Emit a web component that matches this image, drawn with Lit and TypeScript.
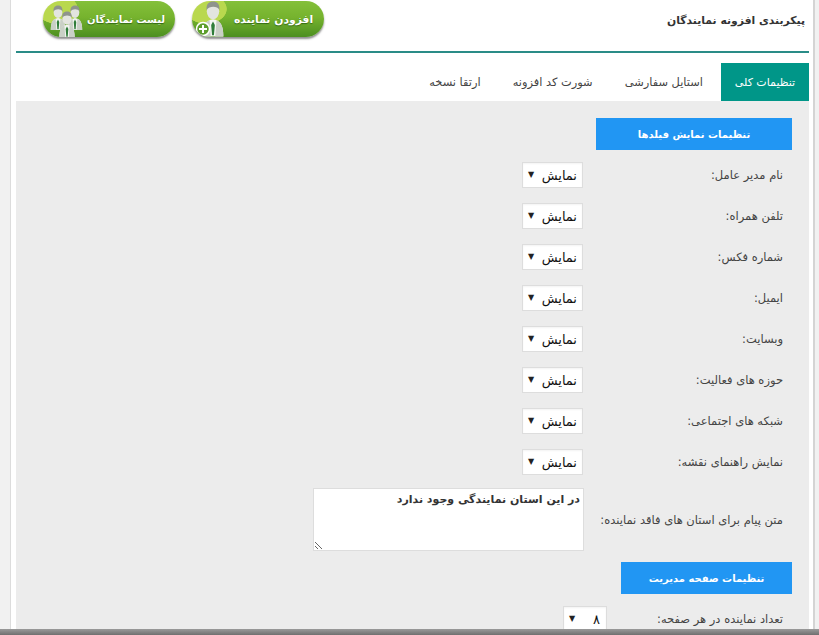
import { LitElement, html, css, svg } from "lit";
import { customElement } from "lit/decorators.js";

const person = (x: number, y: number, s: number) => svg`
  <g transform="translate(${x} ${y}) scale(${s})">
    <path d="M-9 30 C-9 20 -6 16 0 15 C6 16 9 20 9 30 Z" fill="#f4f6f2"/>
    <path d="M-9 30 C-9 21 -7 17 -3 16 L-2 30 Z M9 30 C9 21 7 17 3 16 L2 30 Z" fill="#c9d0c6"/>
    <path d="M0 17 L1.6 20 L0.8 29 L-0.8 29 L-1.6 20 Z" fill="#2f7d3a"/>
    <ellipse cx="0" cy="8" rx="5.4" ry="7" fill="#e3e5df"/>
    <path d="M-5.6 7 C-6 1 -3 -0.5 0 -0.5 C3.5 -0.5 6 1.5 5.6 7 C4 3.5 -3 3 -5.6 7 Z" fill="#8f948c"/>
  </g>`;

const listIcon = html`<svg class="ico" width="42" height="36" viewBox="0 0 42 36" aria-hidden="true">
  ${person(15, 5, 0.8)}${person(32, 5, 0.8)}${person(24, 11, 0.85)}
</svg>`;

const addIcon = html`<svg class="ico" width="42" height="36" viewBox="0 0 42 36" aria-hidden="true">
  ${person(21, 1, 1.15)}
  <circle cx="11" cy="28" r="6.5" fill="#5d9e2c" stroke="#fff" stroke-width="1.5"/>
  <path d="M11 24 V32 M7 28 H15" stroke="#fff" stroke-width="2"/>
</svg>`;

const fields = [
  "نام مدیر عامل:",
  "تلفن همراه:",
  "شماره فکس:",
  "ایمیل:",
  "وبسایت:",
  "حوزه های فعالیت:",
  "شبکه های اجتماعی:",
  "نمایش راهنمای نقشه:",
];

@customElement("app-root")
export class AppRoot extends LitElement {
  static styles = css`
    :host {
      display: block;
      width: 819px;
      height: 635px;
      overflow: hidden;
      background: #f1f1f1;
      font-family: "DejaVu Sans", sans-serif;
      color: #444;
    }
    .viewport {
      height: 629px;
      overflow: hidden;
      display: flex;
      padding: 0 4px 0 10px;
      box-sizing: border-box;
    }
    .bar {
      height: 6px;
      background: linear-gradient(#9a9a9a, #6f6f6f);
    }
    .frame {
      flex: 1;
      background: #fff;
      border-left: 1px solid #dcdcdc;
      border-right: 2px solid #d4d4d4;
      padding: 0 4px 0 5px;
      min-width: 0;
    }
    header {
      height: 51px;
      border-bottom: 2px solid #2a8c87;
      display: flex;
      flex-direction: row-reverse;
      justify-content: space-between;
      align-items: flex-start;
      padding: 0 4px 0 27px;
    }
    h1 {
      margin: 13px 0 0;
      font-size: 10.8px;
      line-height: 16px;
      font-weight: 700;
      color: #333;
    }
    .btns {
      display: flex;
      gap: 17px;
      padding-top: 1px;
    }
    .btn {
      width: 132px;
      height: 36px;
      border-radius: 18px;
      background:
        radial-gradient(ellipse 34px 24px at 14px 8px, #b9d84e 0 60%, transparent 62%),
        linear-gradient(#84c03a 0%, #76b32e 45%, #4c8f20 100%);
      box-shadow: 0 2px 2px rgba(70, 70, 70, 0.6);
      display: flex;
      flex-direction: row-reverse;
      align-items: center;
      justify-content: space-between;
      overflow: hidden;
      color: #fff;
      font-size: 10px;
      font-weight: 700;
      white-space: nowrap;
      text-shadow: 0 1px 1px rgba(0, 50, 0, 0.5);
      direction: rtl;
      padding: 0 10px 0 0;
      box-sizing: border-box;
    }
    .btn.add {
      padding-right: 13px;
      font-size: 10.8px;
    }
    .ico {
      flex: none;
    }
    nav {
      display: flex;
      flex-direction: row-reverse;
      height: 38px;
      margin-top: 10px;
      font-size: 11.4px;
      color: #444;
    }
    nav a {
      display: flex;
      align-items: center;
      padding: 0 16px;
      white-space: nowrap;
      direction: rtl;
    }
    nav a.on {
      width: 88px;
      box-sizing: border-box;
      justify-content: center;
      padding: 0;
      background: #009688;
      color: #fff;
      font-size: 11px;
    }
    nav a.t2 {
      margin-right: 2px;
    }
    .panel {
      background: #ececec;
      direction: rtl;
      padding: 17px 17px 0 0;
    }
    h2 {
      margin: 0;
      height: 32px;
      display: flex;
      align-items: center;
      justify-content: center;
      background: #2196f3;
      color: #fff;
      font-size: 10px;
      font-weight: 700;
    }
    h2.a {
      width: 196px;
    }
    h2.b {
      width: 171px;
    }
    .rows {
      display: grid;
      row-gap: 15px;
      margin: 12px 0 11px;
    }
    .row {
      display: grid;
      grid-template-columns: 209px auto;
      justify-content: start;
      align-items: center;
    }
    label {
      font-size: 11.5px;
      padding-right: 9px;
      white-space: nowrap;
      color: #444;
    }
    .select {
      width: 61px;
      height: 26px;
      box-sizing: border-box;
      background: #fff;
      border: 1px solid #ddd;
      box-shadow: inset 0 1px 2px rgba(0, 0, 0, 0.05);
      display: flex;
      align-items: center;
      justify-content: space-between;
      padding: 0 5px;
      font-size: 13px;
      color: #111;
    }
    .select.small {
      width: 44px;
      margin-right: -24px;
      padding: 0 6px 0 5px;
    }
    .arrow {
      font-size: 8px;
      line-height: 1;
      color: #222;
    }
    .text {
      width: 271px;
      height: 63px;
      box-sizing: border-box;
      display: block;
      margin: 0 -1px 0 0;
      border: 1px solid #ddd;
      background: #fff;
      font: 700 11px "DejaVu Sans", sans-serif;
      color: #333;
      padding: 4px 3px;
      direction: rtl;
    }
    .row.msg {
      margin-top: -2px;
    }
  `;

  private select(v = "نمایش", small = false) {
    return html`<div class="select ${small ? "small" : ""}" role="combobox">
      <span>${v}</span><span class="arrow">▼</span>
    </div>`;
  }

  render() {
    return html`
      <div class="viewport">
        <div class="frame">
          <header>
            <h1 dir="rtl">پیکربندی افزونه نمایندگان</h1>
            <div class="btns">
              <div class="btn">${listIcon}<span>لیست نمایندگان</span></div>
              <div class="btn add">${addIcon}<span>افزودن نماینده</span></div>
            </div>
          </header>
          <nav>
            <a class="on">تنظیمات کلی</a>
            <a class="t2">استایل سفارشی</a>
            <a>شورت کد افزونه</a>
            <a>ارتقا نسخه</a>
          </nav>
          <div class="panel">
            <h2 class="a">تنظیمات نمایش فیلدها</h2>
            <div class="rows">
              ${fields.map(
                (f) => html`<div class="row"><label>${f}</label>${this.select()}</div>`
              )}
              <div class="row msg">
                <label>متن پیام برای استان های فاقد نماینده:</label>
                <textarea class="text">در این استان نمایندگی وجود ندارد</textarea>
              </div>
            </div>
            <h2 class="b">تنظیمات صفحه مدیریت</h2>
            <div class="rows">
              <div class="row"><label>تعداد نماینده در هر صفحه:</label>${this.select("۸", true)}</div>
            </div>
          </div>
        </div>
      </div>
      <div class="bar"></div>
    `;
  }
}
